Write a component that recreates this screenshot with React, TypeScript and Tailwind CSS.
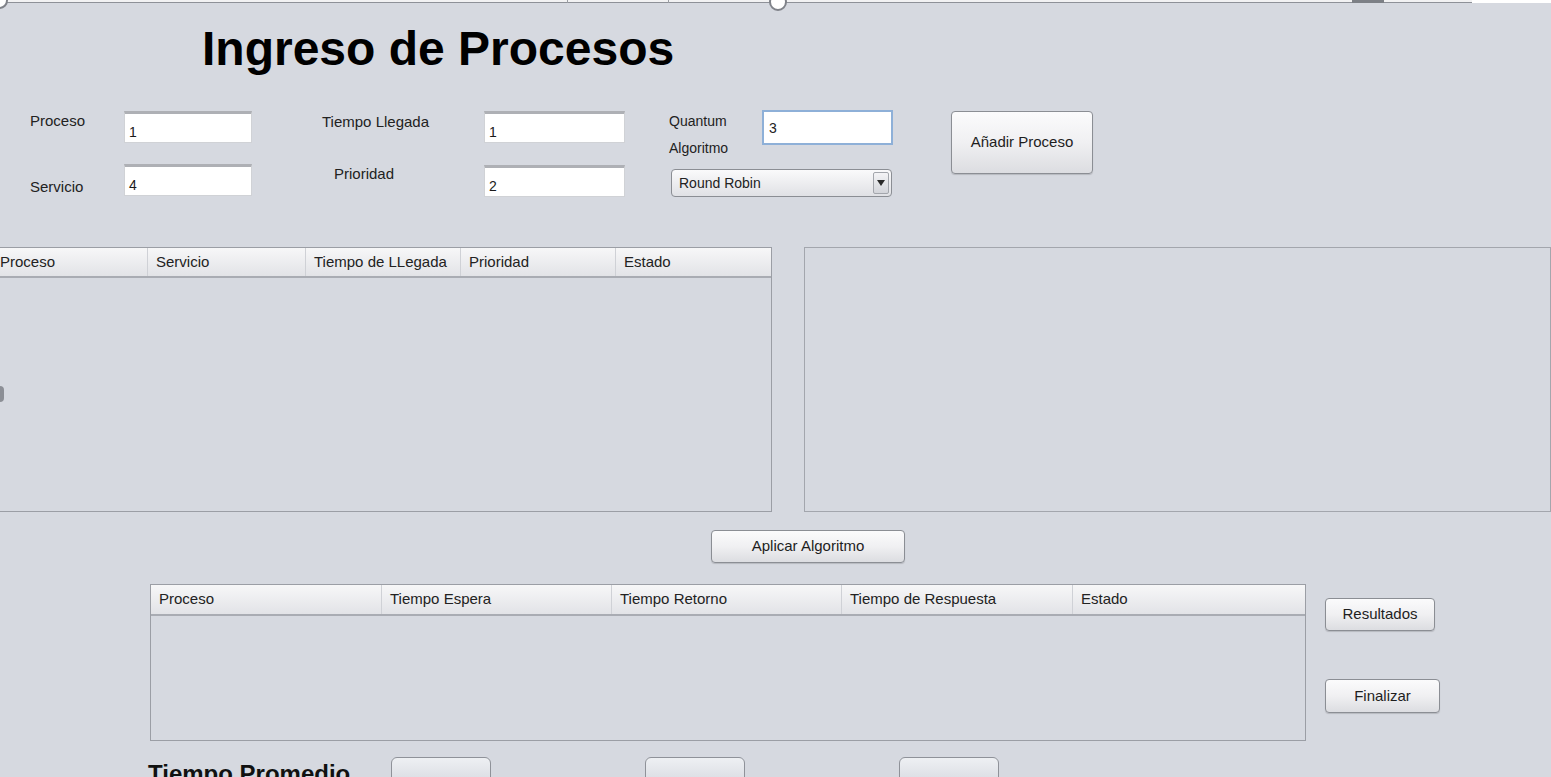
import React from "react";

const font = { fontFamily: '"Liberation Sans", Arial, sans-serif' };

function Field({ value, className = "" }: { value: string; className?: string }) {
  return (
    <div
      className={`bg-white border border-[#d0d2d6] border-t-[3px] border-t-[#aeb0b5] pl-[4px] pt-[10px] text-[14px] leading-[17px] text-[#1a1a1a] ${className}`}
    >
      {value}
    </div>
  );
}

function Btn({ label, className = "" }: { label: string; className?: string }) {
  return (
    <div
      className={`flex items-center justify-center rounded-[4px] border border-[#8b8e94] bg-gradient-to-b from-[#fbfbfc] via-[#f0f0f2] to-[#dcdde1] shadow-[0_1px_1px_rgba(0,0,0,0.15)] text-[15px] text-[#1e1e1e] ${className}`}
    >
      {label}
    </div>
  );
}

function HeaderCell({ label, w, last = false }: { label: string; w: number; last?: boolean }) {
  return (
    <div
      style={{ width: w }}
      className={`h-full flex items-center pl-[8px] text-[15px] text-[#222] shrink-0 ${last ? "" : "border-r border-[#cfd1d6]"}`}
    >
      {label}
    </div>
  );
}

export default function App() {
  return (
    <div style={font} className="relative w-[1551px] h-[777px] overflow-hidden bg-[#d6d9e0] text-[#222]">
      {/* top strip */}
      <div className="flex h-[3px]">
        <div className="w-[1472px] bg-[#f2f2f3] border-b border-[#8e9198]" />
        <div className="flex-1 bg-white" />
      </div>
      <div className="absolute left-[-9px] top-[-8px] w-[17px] h-[17px] rounded-full border-2 border-[#7f8289] bg-white" />
      <div className="absolute left-[769px] top-[-7px] w-[18px] h-[18px] rounded-full border-2 border-[#7f8289] bg-white" />
      <div className="absolute left-[567px] top-0 w-[1px] h-[3px] bg-[#9a9da3]" />
      <div className="absolute left-[668px] top-0 w-[1px] h-[3px] bg-[#9a9da3]" />
      <div className="absolute left-[1352px] top-0 w-[32px] h-[3px] bg-[#7d8086]" />
      <div className="absolute left-[-4px] top-[386px] w-[8px] h-[16px] rounded-full bg-[#8c8f96]" />

      {/* title */}
      <div className="pl-[202px] pt-[22px] text-[48px] leading-[48px] font-bold text-black">
        Ingreso de Procesos
      </div>

      {/* form */}
      <div className="flex pl-[30px] mt-[38px] h-[136px]">
        <div className="w-[94px] flex flex-col text-[15px] leading-[17px]">
          <span className="mt-[1px]">Proceso</span>
          <span className="mt-[49px]">Servicio</span>
        </div>
        <div className="w-[128px] flex flex-col gap-[21px]">
          <Field value="1" className="h-[32px]" />
          <Field value="4" className="h-[32px]" />
        </div>
        <div className="w-[232px] flex flex-col text-[15px] leading-[17px]">
          <span className="mt-[2px] ml-[70px]">Tiempo Llegada</span>
          <span className="mt-[35px] ml-[82px]">Prioridad</span>
        </div>
        <div className="w-[141px] flex flex-col gap-[22px]">
          <Field value="1" className="h-[32px]" />
          <Field value="2" className="h-[32px]" />
        </div>
        <div className="ml-[44px] w-[224px] flex flex-col">
          <div className="flex">
            <div className="w-[93px] flex flex-col text-[14px] leading-[17px]">
              <span className="mt-[2px]">Quantum</span>
              <span className="mt-[10px]">Algoritmo</span>
            </div>
            <div className="w-[131px] h-[35px] -mt-[1px] bg-white border-2 border-[#8eb0d8] pl-[5px] pt-[8px] text-[14px] leading-[17px]">
              3
            </div>
          </div>
          <div className="mt-[12px] ml-[2px] w-[221px] h-[28px] rounded-[4px] border border-[#8b8e94] bg-gradient-to-b from-[#fafafb] to-[#e0e1e5] flex items-center justify-between pl-[7px] pr-[2px] text-[14px]">
            <span>Round Robin</span>
            <div className="w-[16px] h-[22px] rounded-[2px] border border-[#a3a6ac] bg-gradient-to-b from-[#f4f4f6] to-[#d3d5da] flex items-center justify-center">
              <svg width="8" height="6" viewBox="0 0 8 6">
                <path d="M0 0H8L4 6Z" fill="#2a2a2a" />
              </svg>
            </div>
          </div>
        </div>
        <Btn label="Añadir Proceso" className="ml-[58px] w-[142px] h-[63px] text-[14px]" />
      </div>

      {/* tables row */}
      <div className="flex h-[265px]">
        <div className="ml-[-9px] w-[781px] h-full border border-[#9b9ea5] flex flex-col">
          <div className="h-[30px] flex border-b-2 border-[#a9acb3] bg-gradient-to-b from-[#f7f7f8] to-[#e2e3e7]">
            <HeaderCell label="Proceso" w={156} />
            <HeaderCell label="Servicio" w={158} />
            <HeaderCell label="Tiempo de LLegada" w={155} />
            <HeaderCell label="Prioridad" w={155} />
            <HeaderCell label="Estado" w={155} last />
          </div>
          <div className="flex-1" />
        </div>
        <div className="ml-[32px] w-[760px] h-full border border-[#a3a6ad]" />
      </div>

      {/* aplicar */}
      <div className="mt-[18px] pl-[711px]">
        <Btn label="Aplicar Algoritmo" className="w-[194px] h-[33px] text-[14px]" />
      </div>

      {/* results */}
      <div className="mt-[21px] flex pl-[150px]">
        <div className="w-[1156px] h-[157px] border border-[#9b9ea5] flex flex-col">
          <div className="h-[31px] flex border-b-2 border-[#a9acb3] bg-gradient-to-b from-[#f7f7f8] to-[#e2e3e7]">
            <HeaderCell label="Proceso" w={231} />
            <HeaderCell label="Tiempo Espera" w={230} />
            <HeaderCell label="Tiempo Retorno" w={230} />
            <HeaderCell label="Tiempo de Respuesta" w={231} />
            <HeaderCell label="Estado" w={232} last />
          </div>
          <div className="flex-1" />
        </div>
        <div className="ml-[19px] flex flex-col">
          <Btn label="Resultados" className="mt-[14px] w-[110px] h-[33px] text-[14px]" />
          <Btn label="Finalizar" className="mt-[48px] w-[115px] h-[34px] text-[14px]" />
        </div>
      </div>

      {/* promedio */}
      <div className="mt-[16px] flex pl-[148px]">
        <div className="w-[243px] mt-[5px] text-[24px] leading-[24px] font-bold text-[#111]">Tiempo Promedio</div>
        <div className="w-[100px] h-[30px] rounded-[6px] border border-[#8f9299] bg-gradient-to-b from-[#eef0f3] to-[#d6d9e0]" />
        <div className="ml-[154px] w-[100px] h-[30px] rounded-[6px] border border-[#8f9299] bg-gradient-to-b from-[#eef0f3] to-[#d6d9e0]" />
        <div className="ml-[154px] w-[100px] h-[30px] rounded-[6px] border border-[#8f9299] bg-gradient-to-b from-[#eef0f3] to-[#d6d9e0]" />
      </div>
    </div>
  );
}
